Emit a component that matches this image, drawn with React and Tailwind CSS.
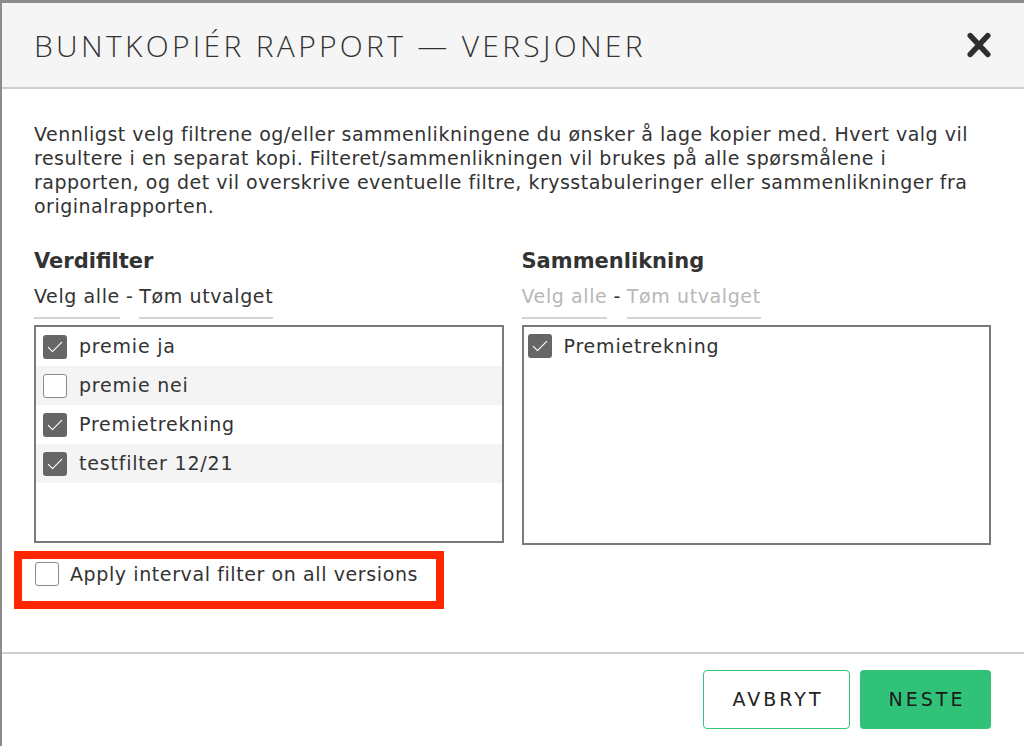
import React, { useState } from "react";

const font = { fontFamily: "'DejaVu Sans', Verdana, sans-serif" };

const CheckBox = ({ checked }) =>
  checked ? (
    <span className="flex h-6 w-6 shrink-0 items-center justify-center rounded-[3px] bg-[#666666]">
      <svg viewBox="0 0 24 24" className="h-[20px] w-[20px]" fill="none" stroke="white" strokeWidth="1.4" strokeLinecap="round" strokeLinejoin="round">
        <path d="M4 12.5l5 5 11-11" />
      </svg>
    </span>
  ) : (
    <span className="h-6 w-6 shrink-0 rounded-[3px] border-[1.5px] border-[#8a8a8a] bg-white" />
  );

const filters = [
  { label: "premie ja", checked: true },
  { label: "premie nei", checked: false },
  { label: "Premietrekning", checked: true },
  { label: "testfilter 12/21", checked: true },
];

const Links = ({ muted }) => (
  <div className="mt-[10px] flex items-start text-[19px] leading-[24px] tracking-[0.6px]">
    <span className={`border-b-2 border-[#d4d4d4] pb-[9px] ${muted ? "text-[#b8b8b8]" : "text-[#333]"}`}>Velg alle</span>
    <span className="px-[6px] text-[#333]">-</span>
    <span className={`border-b-2 border-[#d4d4d4] pb-[9px] ${muted ? "text-[#b8b8b8]" : "text-[#333]"}`}>Tøm utvalget</span>
  </div>
);

export default function App() {
  const [items] = useState(filters);

  return (
    <div className="h-[746px] w-full overflow-hidden bg-[#8c8c8c] pl-[2px] pt-[3px]" style={font}>
      <div className="flex h-full flex-col bg-white">
        {/* Header */}
        <div className="flex h-[86px] shrink-0 items-center justify-between border-b-2 border-[#cfcfcf] bg-[#f5f5f5] pl-[32px] pr-[30px]">
          <h2 className="text-[30px] font-light tracking-[3.3px] text-[#333]" style={{ fontFamily: "'Open Sans', sans-serif" }}>
            BUNTKOPIÉR RAPPORT — VERSJONER
          </h2>
          <svg viewBox="0 0 24 24" className="h-[30px] w-[30px]" fill="none" stroke="#2e2e2e" strokeWidth="4.4" strokeLinecap="round">
            <path d="M5 4.5l14 15M19 4.5l-14 15" />
          </svg>
        </div>

        {/* Body */}
        <div className="pl-[32px] pr-[33px] pt-[33px]">
          <p className="text-[19px] leading-[24px] tracking-[0.5px] text-[#333]">
            Vennligst velg filtrene og/eller sammenlikningene du ønsker å lage kopier med. Hvert valg vil resultere i en separat kopi. Filteret/sammenlikningen vil brukes på alle spørsmålene i rapporten, og det vil overskrive eventuelle filtre, krysstabuleringer eller sammenlikninger fra originalrapporten.
          </p>

          <div className="mt-[30px] grid grid-cols-2 gap-[18px]">
            <div>
              <h3 className="text-[21px] font-bold leading-[26px] text-[#333]">Verdifilter</h3>
              <Links />
              <div className="mt-[6px] h-[218px] border-2 border-[#7a7a7a]">
                {items.map((it, i) => (
                  <div key={it.label} className={`flex h-[39px] items-center gap-3 pl-[7px] ${i % 2 ? "bg-[#f4f4f4]" : ""}`}>
                    <CheckBox checked={it.checked} />
                    <span className="text-[19px] tracking-[0.8px] text-[#333]">{it.label}</span>
                  </div>
                ))}
              </div>
            </div>
            <div>
              <h3 className="text-[21px] font-bold leading-[26px] text-[#333]">Sammenlikning</h3>
              <Links muted />
              <div className="mt-[6px] h-[220px] border-2 border-[#7a7a7a] pl-[4px] pt-[5px]">
                <div className="flex items-center gap-3">
                  <CheckBox checked />
                  <span className="text-[19px] tracking-[0.8px] text-[#333]">Premietrekning</span>
                </div>
              </div>
            </div>
          </div>

          <div className="-ml-[20px] mt-[6px] flex h-[58px] w-[430px] items-start gap-[11px] border-[8px] border-[#ff2600] pl-[13px] pt-[3px]">
            <CheckBox checked={false} />
            <span className="text-[19px] leading-[24px] tracking-[0.6px] text-[#333]">Apply interval filter on all versions</span>
          </div>
        </div>

        {/* Footer */}
        <div className="mt-[43px] flex justify-end gap-[10px] border-t-2 border-[#cfcfcf] pr-[33px] pt-[16px]">
          <button className="h-[59px] w-[147px] rounded-[4px] border-[1.5px] border-[#33c47a] bg-white pl-[3px] text-[19px] tracking-[3px] text-[#222]">
            AVBRYT
          </button>
          <button className="h-[59px] w-[131px] rounded-[4px] bg-[#31c279] pl-[3px] text-[19px] tracking-[3px] text-[#1a1a1a]">
            NESTE
          </button>
        </div>
      </div>
    </div>
  );
}
